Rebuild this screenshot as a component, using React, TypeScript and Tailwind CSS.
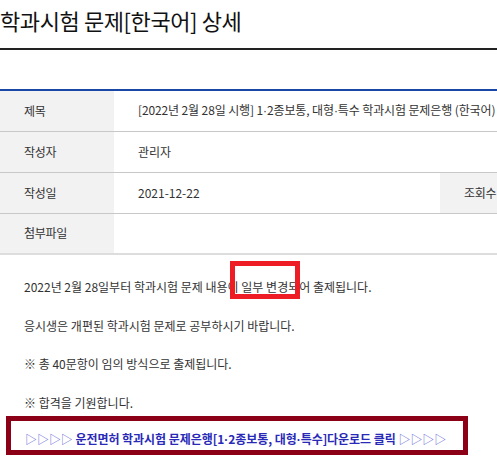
import React from "react";

const font = { fontFamily: '"Malgun Gothic", "Noto Sans CJK KR", "Noto Sans", sans-serif' };
const Dot = () => <span style={{ fontFamily: '"Liberation Sans", sans-serif' }}>·</span>;

export default function App() {
  return (
    <div className="w-[497px] h-[460px] overflow-hidden bg-white text-[#333]" style={font}>
      <h1 className="h-[48px] pt-[4px] text-[22px] leading-[32px] font-normal text-[#111] whitespace-nowrap tracking-[-0.4px]">
        학과시험 문제[한국어] 상세
      </h1>
      <div className="h-[2px] bg-[#222]" />
      <div className="h-[39px]" />
      <div className="overflow-hidden">
        <table className="w-[660px] border-collapse text-[12px] border-t-2 border-t-[#1847a8] border-b-2 border-b-[#ddd]">
          <tbody>
            <tr className="h-[41px] border-b border-[#c8c8c8]">
              <th className="w-[114px] bg-[#f2f2f2] text-left pl-[24px] font-normal tracking-[-0.3px]">제목</th>
              <td colSpan={3} className="pl-[24px] whitespace-nowrap tracking-[-0.12px]">
                [2022년 2월 28일 시행] 1<Dot />2종보통, 대형<Dot />특수 학과시험 문제은행 (한국어)
              </td>
            </tr>
            <tr className="h-[41px] border-b border-[#c8c8c8]">
              <th className="bg-[#f2f2f2] text-left pl-[24px] font-normal tracking-[-0.3px]">작성자</th>
              <td colSpan={3} className="pl-[24px]">관리자</td>
            </tr>
            <tr className="h-[41px] border-b border-[#c8c8c8]">
              <th className="bg-[#f2f2f2] text-left pl-[24px] font-normal tracking-[-0.3px]">작성일</th>
              <td className="w-[326px] pl-[24px]">2021-12-22</td>
              <th className="w-[114px] bg-[#f2f2f2] text-left pl-[24px] font-normal tracking-[-0.3px]">조회수</th>
              <td className="pl-[24px]"></td>
            </tr>
            <tr className="h-[41px]">
              <th className="bg-[#f2f2f2] text-left pl-[24px] font-normal tracking-[-0.3px]">첨부파일</th>
              <td colSpan={3}></td>
            </tr>
          </tbody>
        </table>
      </div>
      <div className="pl-[24px] pt-[22px] text-[12px] leading-[20px] flex flex-col gap-[18.5px] whitespace-nowrap">
        <p>
          2022년 2월 28일부터 학과시험 문제 내용이{" "}
          <span className="relative">
            일부 변경되
            <span className="absolute left-[-11px] right-[-1px] top-[-17px] bottom-[-4px] border-[5px] border-[#ee1c25]" />
          </span>
          어 출제됩니다.
        </p>
        <p>응시생은 개편된 학과시험 문제로 공부하시기 바랍니다.</p>
        <p>※ 총 40문항이 임의 방식으로 출제됩니다.</p>
        <p>※ 합격을 기원합니다.</p>
      </div>
      <div className="ml-[6px] mt-[3px] w-[462px] h-[39px] border-[5px] border-[#8b0016] pl-[14px] pt-[8px] text-[12px] leading-[20px] font-bold text-[#2a2ab8] whitespace-nowrap tracking-[-0.05px]">
        <span className="font-normal text-[#6a6ad8]">▷▷▷▷</span> 운전면허 학과시험 문제은행[1<Dot />2종보통, 대형<Dot />특수]다운로드 클릭{" "}
        <span className="font-normal text-[#6a6ad8]">▷▷▷▷</span>
      </div>
    </div>
  );
}
